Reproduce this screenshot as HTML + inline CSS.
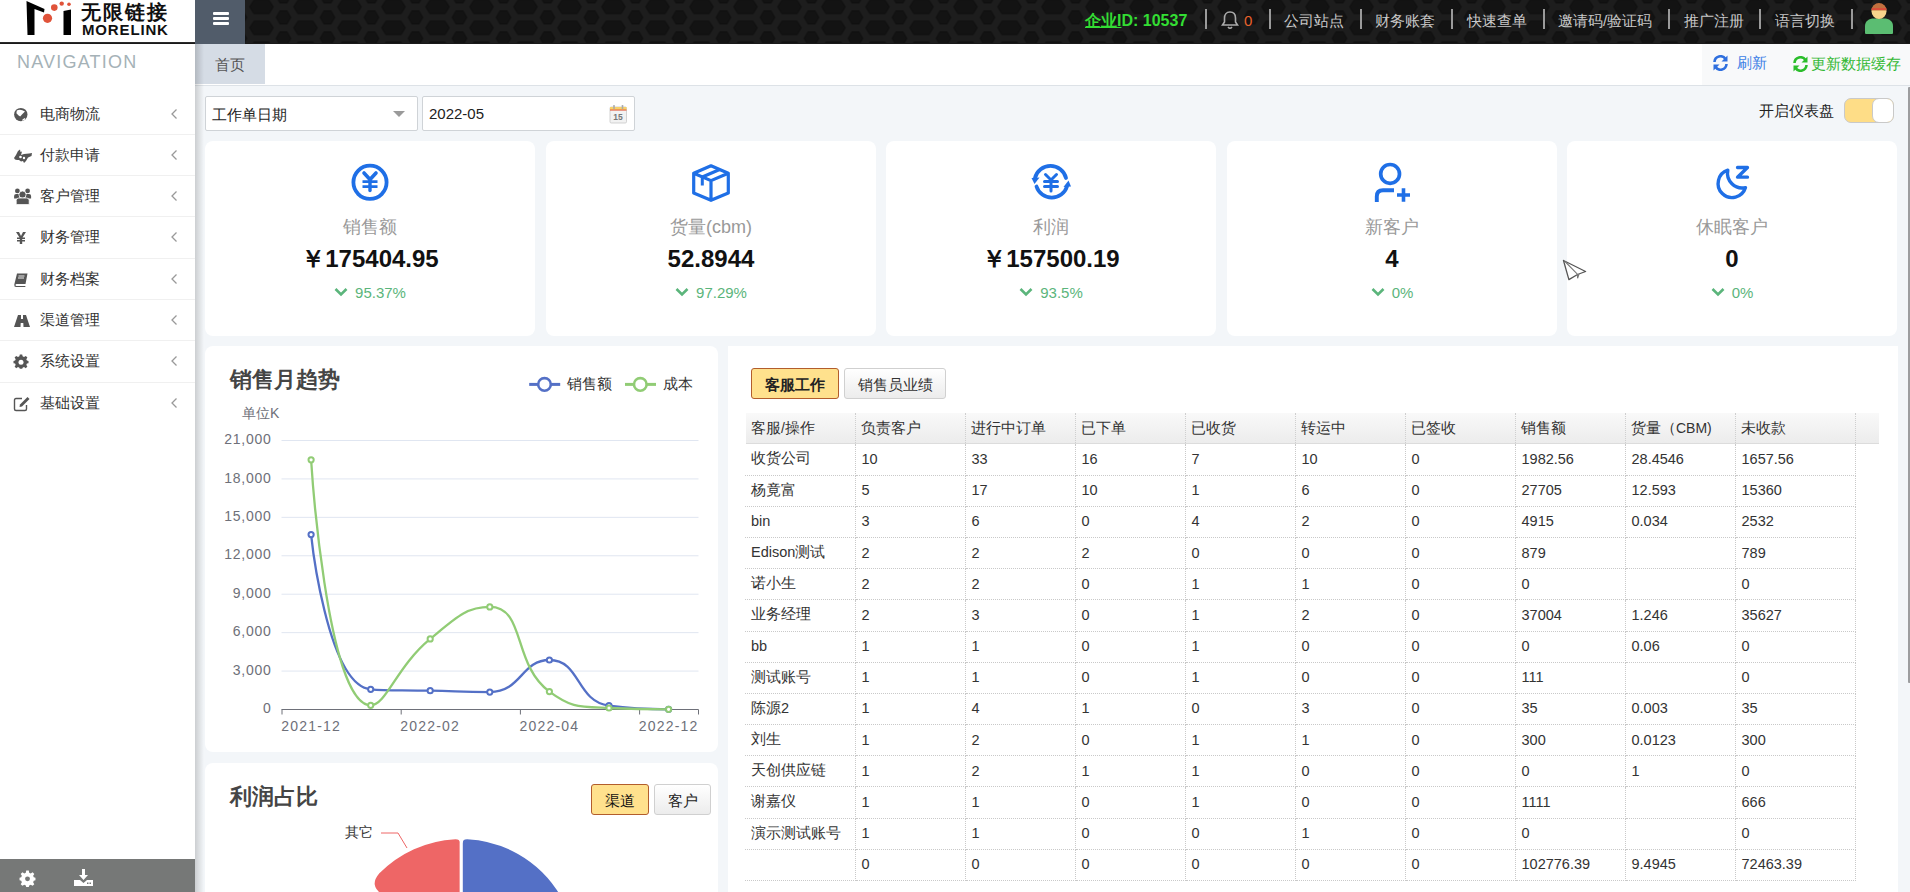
<!DOCTYPE html>
<html><head><meta charset="utf-8">
<style>
*{box-sizing:border-box;margin:0;padding:0}
html,body{width:1910px;height:892px;overflow:hidden;background:#f3f6f9;font-family:"Liberation Sans",sans-serif;color:#333}
.abs{position:absolute}
#hdr{position:absolute;left:0;top:0;width:1910px;height:44px;background:#161616}
#logo{position:absolute;left:0;top:0;width:195px;height:43px;background:#fff;border-bottom:1px solid #2a2a2a}
#ham{position:absolute;left:195px;top:0;width:50px;height:44px;background:#515c6a}
.topnav{position:absolute;top:0;height:44px;line-height:42px;font-size:15px;color:#c8c8c8;white-space:nowrap}
.tsep{position:absolute;top:9px;width:2px;height:20px;background:#9a9a9a}
#side{position:absolute;left:0;top:44px;width:195px;height:848px;background:#fff}
.nav-t{position:absolute;left:17px;top:8px;font-size:18px;color:#a5b2b7;letter-spacing:1.2px}
.mi{position:absolute;left:0;width:195px;height:41.3px;border-bottom:1px solid #f0f0f0}
.mi .tx{position:absolute;left:40px;top:0;line-height:40px;font-size:15px;color:#333}
.mi .ch{position:absolute;left:170px;top:14px}
.mi .ic{position:absolute;left:13px;top:13px}
#sfoot{position:absolute;left:0;top:859px;width:195px;height:33px;background:#767877}
#shadow{position:absolute;left:195px;top:44px;width:9px;height:848px;background:linear-gradient(to right,rgba(0,0,0,0.16),rgba(0,0,0,0))}
#tabbar{position:absolute;left:195px;top:44px;width:1715px;height:42px;background:#fff;border-bottom:1px solid #dde2e7}
#tab1{position:absolute;left:0;top:0;width:70px;height:40px;background:#d5dce5;font-size:15px;color:#555;line-height:42px;padding-left:20px}
#tbright{position:absolute;left:1507px;top:0;width:208px;height:41px;background:#f8f9fa}
.card{position:absolute;background:#fff;border-radius:8px}
.kpi .lbl{position:absolute;left:0;width:100%;text-align:center;top:76px;font-size:18px;color:#999;line-height:20px}
.kpi .val{position:absolute;left:0;width:100%;text-align:center;top:104px;font-size:24px;font-weight:bold;color:#111;line-height:28px}
.kpi .pct{position:absolute;left:0;width:100%;text-align:center;top:143px;font-size:15px;color:#5bb57b;line-height:18px}
.kpi svg.ico{position:absolute;top:21px}
table.t{position:absolute;border-collapse:collapse;table-layout:fixed;font-size:14.5px;color:#333}
.cj{font-size:15px}
table.t td{height:31.18px;padding:0 0 1px 6px;border-right:1px dotted #c9c9c9;border-bottom:1px dotted #c9c9c9;white-space:nowrap;overflow:hidden;vertical-align:middle}
.btn{position:absolute;font-size:14px;text-align:center;border-radius:3px}
.btn.on{background:#ffe18d;border:1px solid #b25d2c;font-weight:bold;color:#222}
.btn.off{background:linear-gradient(#fff,#ececec);border:1px solid #d0d0d0;color:#333}
</style></head><body>
<div id="hdr">
<svg width="1910" height="44" style="position:absolute;left:0;top:0">
<defs><pattern id="hex" patternUnits="userSpaceOnUse" x="239.5" y="-3.6" width="44" height="21">
<rect width="44" height="21" fill="#1d1d1d"/>
<polygon points="9.7,10.5 14.2,3.3 29.8,3.3 34.3,10.5 29.8,17.7 14.2,17.7" fill="#0e0e0e"/>
<polygon points="10.9,10.5 14.9,4.3 29.1,4.3 33.1,10.5 29.1,16.7 14.9,16.7" fill="#131313"/>
<polygon points="-7.8,0 -3.8,-7 3.8,-7 7.8,0 3.8,7 -3.8,7" fill="#0e0e0e"/>
<polygon points="36.2,0 40.2,-7 47.8,-7 51.8,0 47.8,7 40.2,7" fill="#0e0e0e"/>
<polygon points="-7.8,21 -3.8,14 3.8,14 7.8,21 3.8,28 -3.8,28" fill="#0e0e0e"/>
<polygon points="36.2,21 40.2,14 47.8,14 51.8,21 47.8,28 40.2,28" fill="#0e0e0e"/>
<polygon points="-6.6,0 -3.2,-6 3.2,-6 6.6,0 3.2,6 -3.2,6" fill="#131313"/>
<polygon points="37.4,0 40.8,-6 47.2,-6 50.6,0 47.2,6 40.8,6" fill="#131313"/>
<polygon points="-6.6,21 -3.2,15 3.2,15 6.6,21 3.2,27 -3.2,27" fill="#131313"/>
<polygon points="37.4,21 40.8,15 47.2,15 50.6,21 47.2,27 40.8,27" fill="#131313"/>
</pattern></defs>
<rect x="245" y="0" width="1665" height="44" fill="url(#hex)"/>
<rect x="0" y="43" width="1910" height="1" fill="#1a1a1a"/>
</svg>
</div>
<div id="logo">
<svg width="195" height="43" style="position:absolute;left:0;top:0">
<path d="M26.5,1 L27.5,35 L34.5,35 L34.5,9 L44,12.5 L44.5,9 Z" fill="#000"/>
<path d="M63.5,11 L71,9.5 L71,35 L63.5,35 Z" fill="#000"/>
<circle cx="47.5" cy="18.3" r="4.6" fill="#e0533a"/>
<circle cx="54.3" cy="7.6" r="3.3" fill="#e0533a"/>
<circle cx="61.7" cy="3.6" r="2.2" fill="#e0533a"/>
<circle cx="69" cy="4.3" r="1.8" fill="#e0533a"/>
</svg>
<div class="abs" style="left:81px;top:-1px;font-size:20px;line-height:26px;color:#111;letter-spacing:2px;font-weight:bold">无限链接</div>
<div class="abs" style="left:82px;top:21px;font-size:15px;line-height:17px;color:#111;font-weight:bold;letter-spacing:0.85px">MORELINK</div>
</div>
<div id="ham">
<div class="abs" style="left:18px;top:12px;width:16px;height:3px;background:#fff;border-radius:1px"></div>
<div class="abs" style="left:18px;top:17px;width:16px;height:3px;background:#fff;border-radius:1px"></div>
<div class="abs" style="left:18px;top:22px;width:16px;height:3px;background:#fff;border-radius:1px"></div>
</div>
<div class="topnav" style="left:1085px;color:#33dd33;font-weight:bold;font-size:16px"><span style="text-decoration:underline">企业I</span>D:&nbsp;10537</div>
<div class="tsep" style="left:1205px"></div>
<svg class="abs" style="left:1221px;top:10px" width="18" height="20" viewBox="0 0 18 20"><path d="M9,2 C5,2 3.5,5 3.5,8 L3.5,12 L1.5,15 L16.5,15 L14.5,12 L14.5,8 C14.5,5 13,2 9,2 Z" fill="none" stroke="#aaa" stroke-width="1.6"/><path d="M7,17 Q9,19.5 11,17" fill="none" stroke="#aaa" stroke-width="1.6"/></svg>
<div class="topnav" style="left:1244px;color:#e8622c">0</div>
<div class="tsep" style="left:1269px"></div>
<div class="topnav" style="left:1284px">公司站点</div>
<div class="tsep" style="left:1360px"></div>
<div class="topnav" style="left:1375px">财务账套</div>
<div class="tsep" style="left:1451px"></div>
<div class="topnav" style="left:1467px">快速查单</div>
<div class="tsep" style="left:1543px"></div>
<div class="topnav" style="left:1558px">邀请码/验证码</div>
<div class="tsep" style="left:1668px"></div>
<div class="topnav" style="left:1684px">推广注册</div>
<div class="tsep" style="left:1759px"></div>
<div class="topnav" style="left:1775px">语言切换</div>
<div class="tsep" style="left:1851px"></div>
<svg class="abs" style="left:1864px;top:2px" width="30" height="32" viewBox="0 0 30 32">
<path d="M1,31 L1,24 C1,19 5,16.5 10,16.5 L20,16.5 C25,16.5 29,19 29,24 L29,31 Q29,32 28,32 L2,32 Q1,32 1,31Z" fill="#5bbd72"/>
<circle cx="15" cy="9.5" r="7.5" fill="#f8d48c"/>
<path d="M7.5,8.5 A7.5,7.5 0 0 1 22.5,8.5 Z" fill="#c2703e"/>
<rect x="7.6" y="6.2" width="14.8" height="1.6" fill="#e0483a"/>
</svg>
<div id="side">
<div class="nav-t">NAVIGATION</div>
<div class="mi" style="top:49.5px"><div class="ic"><svg width="16" height="16" viewBox="0 0 16 16"><circle cx="7.8" cy="7.6" r="6.7" fill="#555"/><path d="M3.8,3.4 Q7.5,1.6 12,4.4 L9.2,7.2 L7.2,9.4 L5.6,8.6 L3.4,6.2 Z" fill="#fff"/><path d="M9,12.9 L11.5,11.1 L12.5,11.9 Q11.2,13.4 9.5,13.8 Z" fill="#fff"/></svg></div><div class="tx">电商物流</div><svg class="ch" width="8" height="12" viewBox="0 0 8 12"><path d="M6.5,1.5 L2,6 L6.5,10.5" fill="none" stroke="#999" stroke-width="1.3"/></svg></div>
<div class="mi" style="top:90.8px"><div class="ic"><svg width="20" height="16" viewBox="0 0 20 16"><path d="M1,10 L3,7 L5,3 L7,1.5 L7.5,4 L9,3.5 L8,7 L11,6 L16,5.5 L19,5 L18.5,8 L15,9.5 L13,13 L11,15 L10,13 L8,13.5 L6,12 L4,12 L2,11.5Z" fill="#555"/><circle cx="7.5" cy="9" r="1.3" fill="#fff"/><circle cx="11" cy="10" r="1.2" fill="#fff"/></svg></div><div class="tx">付款申请</div><svg class="ch" width="8" height="12" viewBox="0 0 8 12"><path d="M6.5,1.5 L2,6 L6.5,10.5" fill="none" stroke="#999" stroke-width="1.3"/></svg></div>
<div class="mi" style="top:132.1px"><div class="ic"><svg width="20" height="18" viewBox="0 0 20 18" style="margin:-2px 0 0 -1px"><circle cx="5.4" cy="3.9" r="2.4" fill="#555"/><circle cx="15.6" cy="3.9" r="2.4" fill="#555"/><path d="M2.1,11.4 L2.1,9 Q2.1,6.9 4.2,6.9 L7.5,6.9 L7.5,11.4Z M19.1,11.4 L19.1,9 Q19.1,6.9 17,6.9 L13.5,6.9 L13.5,11.4Z" fill="#555"/><circle cx="10.5" cy="7.6" r="3.6" fill="#555" stroke="#fff" stroke-width="0.8"/><path d="M4.2,17.6 L4.2,13.5 Q4.2,11 6.7,11 L14.7,11 Q17.2,11 17.2,13.5 L17.2,17.6Z" fill="#555" stroke="#fff" stroke-width="0.8"/></svg></div><div class="tx">客户管理</div><svg class="ch" width="8" height="12" viewBox="0 0 8 12"><path d="M6.5,1.5 L2,6 L6.5,10.5" fill="none" stroke="#999" stroke-width="1.3"/></svg></div>
<div class="mi" style="top:173.4px"><div class="ic"><svg width="16" height="16" viewBox="0 0 16 16"><path d="M3,2 L6,2 L8,6 L10,2 L13,2 L9.5,7.5 L12,7.5 L12,9 L9.2,9 L9.2,10 L12,10 L12,11.5 L9.2,11.5 L9.2,14 L6.8,14 L6.8,11.5 L4,11.5 L4,10 L6.8,10 L6.8,9 L4,9 L4,7.5 L6.5,7.5Z" fill="#555"/></svg></div><div class="tx">财务管理</div><svg class="ch" width="8" height="12" viewBox="0 0 8 12"><path d="M6.5,1.5 L2,6 L6.5,10.5" fill="none" stroke="#999" stroke-width="1.3"/></svg></div>
<div class="mi" style="top:214.7px"><div class="ic"><svg width="16" height="16" viewBox="0 0 16 16"><path d="M4,1.5 L14.5,1.5 L12.5,12 L3.5,12 Q2.5,12 2.5,13 Q2.5,14 3.5,14 L12.5,14 L12.2,15 L3,15 Q1,15 1.3,12.5 Z" fill="#555"/><path d="M5.5,4 L11.5,4 M5,6 L11,6" stroke="#fff" stroke-width="0.9"/></svg></div><div class="tx">财务档案</div><svg class="ch" width="8" height="12" viewBox="0 0 8 12"><path d="M6.5,1.5 L2,6 L6.5,10.5" fill="none" stroke="#999" stroke-width="1.3"/></svg></div>
<div class="mi" style="top:256.0px"><div class="ic"><svg width="18" height="16" viewBox="0 0 18 16"><path d="M5,2 L8,2 L8,6 L10,6 L10,2 L13,2 L17,14 L10.5,14 L10.3,10 L7.7,10 L7.5,14 L1,14Z" fill="#555"/></svg></div><div class="tx">渠道管理</div><svg class="ch" width="8" height="12" viewBox="0 0 8 12"><path d="M6.5,1.5 L2,6 L6.5,10.5" fill="none" stroke="#999" stroke-width="1.3"/></svg></div>
<div class="mi" style="top:297.3px"><div class="ic"><svg width="16" height="16" viewBox="0 0 16 16"><path d="M6.8,1 L9.2,1 L9.6,3 L11,3.7 L12.8,2.6 L14.4,4.2 L13.3,6 L13.9,7.4 L15.5,7.8 L15.5,10.2 L13.9,10.6 L13.3,12 L14.4,13.8 L12.8,15.4 L11,14.3 L9.6,14.9 L9.2,16 L6.8,16 L6.4,14.9 L5,14.3 L3.2,15.4 L1.6,13.8 L2.7,12 L2.1,10.6 L0.5,10.2 L0.5,7.8 L2.1,7.4 L2.7,6 L1.6,4.2 L3.2,2.6 L5,3.7 L6.4,3Z" fill="#555" transform="translate(0,-0.5) scale(1,0.95)"/><circle cx="8" cy="8.3" r="2.5" fill="#fff"/></svg></div><div class="tx">系统设置</div><svg class="ch" width="8" height="12" viewBox="0 0 8 12"><path d="M6.5,1.5 L2,6 L6.5,10.5" fill="none" stroke="#999" stroke-width="1.3"/></svg></div>
<div class="mi" style="top:338.6px;border-bottom:none"><div class="ic"><svg width="18" height="16" viewBox="0 0 18 16"><path d="M9,2.5 L3,2.5 Q1.5,2.5 1.5,4 L1.5,13 Q1.5,14.5 3,14.5 L12,14.5 Q13.5,14.5 13.5,13 L13.5,9" fill="none" stroke="#555" stroke-width="1.4"/><path d="M14.5,1 L16.5,3 L9,10.5 L6.5,11 L7,8.5Z" fill="#555"/></svg></div><div class="tx">基础设置</div><svg class="ch" width="8" height="12" viewBox="0 0 8 12"><path d="M6.5,1.5 L2,6 L6.5,10.5" fill="none" stroke="#999" stroke-width="1.3"/></svg></div>
</div>
<div id="sfoot">
<svg class="abs" style="left:19px;top:11px" width="17" height="17" viewBox="0 0 16 16"><path d="M6.8,0.5 L9.2,0.5 L9.6,2.5 L11,3.2 L12.8,2.1 L14.4,3.7 L13.3,5.5 L13.9,6.9 L15.5,7.3 L15.5,9.7 L13.9,10.1 L13.3,11.5 L14.4,13.3 L12.8,14.9 L11,13.8 L9.6,14.5 L9.2,16 L6.8,16 L6.4,14.5 L5,13.8 L3.2,14.9 L1.6,13.3 L2.7,11.5 L2.1,10.1 L0.5,9.7 L0.5,7.3 L2.1,6.9 L2.7,5.5 L1.6,3.7 L3.2,2.1 L5,3.2 L6.4,2.5Z" fill="#fff"/><circle cx="8" cy="8.3" r="2.3" fill="#767877"/></svg>
<svg class="abs" style="left:74px;top:10px" width="19" height="18" viewBox="0 0 19 18"><path d="M8,0 L11,0 L11,6 L14,6 L9.5,11 L5,6 L8,6Z" fill="#fff"/><path d="M0,11 L6,11 L9.5,14 L13,11 L19,11 L19,17 L0,17Z" fill="#fff"/><rect x="13" y="13.5" width="1.5" height="1.5" fill="#767877"/><rect x="15.5" y="13.5" width="1.5" height="1.5" fill="#767877"/></svg>
</div><div id="tabbar">
<div id="tab1">首页</div>
<div id="tbright">
<svg class="abs" style="left:10px;top:11px" width="17" height="16" viewBox="0 0 17 16"><path d="M2.5,7 A6,6 0 0 1 13.5,4" fill="none" stroke="#2f6fde" stroke-width="2.6"/><path d="M15.5,0.5 L15.5,6.5 L9.5,6.5Z" fill="#2f6fde"/><path d="M14.5,9 A6,6 0 0 1 3.5,12" fill="none" stroke="#2f6fde" stroke-width="2.6"/><path d="M1.5,15.5 L1.5,9.5 L7.5,9.5Z" fill="#2f6fde"/></svg>
<div class="abs" style="left:35px;top:0;line-height:38px;font-size:15px;color:#3d7fe6">刷新</div>
<svg class="abs" style="left:90px;top:12px" width="17" height="16" viewBox="0 0 17 16"><path d="M2.5,7 A6,6 0 0 1 13.5,4" fill="none" stroke="#2bbd2b" stroke-width="2.6"/><path d="M15.5,0.5 L15.5,6.5 L9.5,6.5Z" fill="#2bbd2b"/><path d="M14.5,9 A6,6 0 0 1 3.5,12" fill="none" stroke="#2bbd2b" stroke-width="2.6"/><path d="M1.5,15.5 L1.5,9.5 L7.5,9.5Z" fill="#2bbd2b"/></svg>
<div class="abs" style="left:109px;top:1px;line-height:38px;font-size:15px;color:#33b833">更新数据缓存</div>
</div>
</div>
<div id="shadow"></div>
<div class="abs" style="left:205px;top:96px;width:213px;height:35px;background:#fff;border:1px solid #cfd3d7;border-radius:2px">
<div class="abs" style="left:6px;top:1px;line-height:33px;font-size:15px;color:#222">工作单日期</div>
<svg class="abs" style="left:187px;top:14px" width="12" height="7"><path d="M0,0 L12,0 L6,6Z" fill="#9a9a9a"/></svg>
</div>
<div class="abs" style="left:422px;top:96px;width:213px;height:35px;background:#fff;border:1px solid #cfd3d7;border-radius:2px">
<div class="abs" style="left:6px;top:0;line-height:33px;font-size:15px;color:#222">2022-05</div>
<svg class="abs" style="left:186px;top:7px" width="19" height="20" viewBox="0 0 19 20"><rect x="1" y="3" width="16.5" height="16" rx="1.2" fill="#f2f2f2" stroke="#c8c8c8" stroke-width="0.8"/><rect x="1" y="3" width="16.5" height="3.2" fill="#f7d26a"/><rect x="1" y="5.6" width="16.5" height="0.9" fill="#e0483a"/><rect x="4.2" y="1" width="1.6" height="4" rx="0.6" fill="#aaa"/><rect x="12.7" y="1" width="1.6" height="4" rx="0.6" fill="#aaa"/><text x="9" y="15.5" font-size="8.5" font-weight="bold" text-anchor="middle" fill="#777" font-family="Liberation Sans">15</text></svg>
</div>
<div class="abs" style="left:1759px;top:101px;line-height:20px;font-size:15px;color:#222">开启仪表盘</div>
<div class="abs" style="left:1844px;top:98px;width:50px;height:25px;border-radius:7px;background:#fedd87;border:1px solid #c9c9c9;overflow:hidden">
<div class="abs" style="left:27px;top:-1px;width:22px;height:25px;border-radius:7px;background:#fff;border:1px solid #c9c9c9"></div>
</div>
<div class="abs" style="left:1908px;top:87px;width:2px;height:596px;background:#9c9d9f;border-radius:1px 0 0 1px"></div>
<div class="card kpi" style="left:205px;top:141px;width:330px;height:195px"><svg class="ico" style="left:145px" width="40" height="40" viewBox="0 0 40 40"><circle cx="20" cy="20.3" r="16.6" fill="none" stroke="#1f6fe6" stroke-width="3.8"/><path d="M14,11 L20,17.5 L26,11" fill="none" stroke="#1f6fe6" stroke-width="3.6" stroke-linecap="round"/><path d="M12.5,19.7 L27.5,19.7 M12.5,24.6 L27.5,24.6" fill="none" stroke="#1f6fe6" stroke-width="2.8"/><path d="M20,17 L20,28.5" fill="none" stroke="#1f6fe6" stroke-width="3.4" stroke-linecap="round"/></svg><div class="lbl">销售额</div><div class="val">￥175404.95</div><div class="pct"><svg width="14" height="10" viewBox="0 0 14 10" style="vertical-align:1px;margin-right:7px"><path d="M1.5,2 L7,7.5 L12.5,2" fill="none" stroke="#5bb57b" stroke-width="2.6"/></svg>95.37%</div></div>
<div class="card kpi" style="left:546px;top:141px;width:330px;height:195px"><svg class="ico" style="left:145px" width="40" height="40" viewBox="0 0 40 40"><path d="M20,3.8 L37.3,11.2 L37.3,31 L20,38.3 L2.7,31 L2.7,11.2 Z M2.7,11.2 L20,18.6 L37.3,11.2 M20,18.6 L20,38.3" fill="none" stroke="#1f6fe6" stroke-width="3.2" stroke-linejoin="round"/><path d="M11.3,15 L28.7,7.5 M11.3,15 L11.3,23.5" fill="none" stroke="#1f6fe6" stroke-width="3"/></svg><div class="lbl">货量(cbm)</div><div class="val">52.8944</div><div class="pct"><svg width="14" height="10" viewBox="0 0 14 10" style="vertical-align:1px;margin-right:7px"><path d="M1.5,2 L7,7.5 L12.5,2" fill="none" stroke="#5bb57b" stroke-width="2.6"/></svg>97.29%</div></div>
<div class="card kpi" style="left:886px;top:141px;width:330px;height:195px"><svg class="ico" style="left:145px" width="40" height="40" viewBox="0 0 40 40"><path d="M4,16 A16,16 0 0 1 35,16" fill="none" stroke="#1f6fe6" stroke-width="3.8" stroke-linecap="round"/><path d="M5.5,24.5 A16,16 0 0 0 36,24.5" fill="none" stroke="#1f6fe6" stroke-width="3.8" stroke-linecap="round"/><path d="M0.5,16 L8.5,15.5 L3.5,22Z" fill="#1f6fe6"/><path d="M40,24.5 L32.5,25 L37.5,18.5Z" fill="#1f6fe6"/><path d="M14.5,12.5 L20,18 L25.5,12.5" fill="none" stroke="#1f6fe6" stroke-width="3" stroke-linecap="round"/><path d="M13.5,19.5 L26.5,19.5 M13.5,24.5 L26.5,24.5 M20,18 L20,29" fill="none" stroke="#1f6fe6" stroke-width="3" stroke-linecap="round"/></svg><div class="lbl">利润</div><div class="val">￥157500.19</div><div class="pct"><svg width="14" height="10" viewBox="0 0 14 10" style="vertical-align:1px;margin-right:7px"><path d="M1.5,2 L7,7.5 L12.5,2" fill="none" stroke="#5bb57b" stroke-width="2.6"/></svg>93.5%</div></div>
<div class="card kpi" style="left:1227px;top:141px;width:330px;height:195px"><svg class="ico" style="left:145px" width="40" height="40" viewBox="0 0 40 40"><circle cx="18.1" cy="11.9" r="9.4" fill="none" stroke="#1f6fe6" stroke-width="3.7"/><path d="M4.8,40 L4.8,34.5 Q4.8,28.3 11,28.3 L22,28.3" fill="none" stroke="#1f6fe6" stroke-width="3.9"/><path d="M25,33 L38,33 M31.5,26.3 L31.5,39.8" fill="none" stroke="#1f6fe6" stroke-width="3.6"/></svg><div class="lbl">新客户</div><div class="val">4</div><div class="pct"><svg width="14" height="10" viewBox="0 0 14 10" style="vertical-align:1px;margin-right:7px"><path d="M1.5,2 L7,7.5 L12.5,2" fill="none" stroke="#5bb57b" stroke-width="2.6"/></svg>0%</div></div>
<div class="card kpi" style="left:1567px;top:141px;width:330px;height:195px"><svg class="ico" style="left:145px" width="40" height="40" viewBox="0 0 40 40"><path d="M15.8,8.2 A14,14 0 1 0 33.5,25.6 A14.8,14.8 0 0 1 15.8,8.2 Z" fill="none" stroke="#1f6fe6" stroke-width="3.4" stroke-linejoin="round"/><path d="M25.5,5.5 L35.5,5.5 L25.5,15.2 L35.5,15.2" fill="none" stroke="#1f6fe6" stroke-width="3.3" stroke-linejoin="round" stroke-linecap="round"/></svg><div class="lbl">休眠客户</div><div class="val">0</div><div class="pct"><svg width="14" height="10" viewBox="0 0 14 10" style="vertical-align:1px;margin-right:7px"><path d="M1.5,2 L7,7.5 L12.5,2" fill="none" stroke="#5bb57b" stroke-width="2.6"/></svg>0%</div></div><div class="card" style="left:205px;top:346px;width:513px;height:406px">
<div class="abs" style="left:25px;top:18px;font-size:22px;font-weight:bold;color:#454545;line-height:32px">销售月趋势</div>
<svg class="abs" style="left:0;top:0" width="513" height="406">
<text x="66.5" y="367.10" text-anchor="end" font-size="14" letter-spacing="0.75" fill="#6e7079" font-family="Liberation Sans">0</text>
<line x1="76.5" y1="325.07" x2="493.5" y2="325.07" stroke="#e0e6f1" stroke-width="1"/>
<text x="66.5" y="328.67" text-anchor="end" font-size="14" letter-spacing="0.75" fill="#6e7079" font-family="Liberation Sans">3,000</text>
<line x1="76.5" y1="286.64" x2="493.5" y2="286.64" stroke="#e0e6f1" stroke-width="1"/>
<text x="66.5" y="290.24" text-anchor="end" font-size="14" letter-spacing="0.75" fill="#6e7079" font-family="Liberation Sans">6,000</text>
<line x1="76.5" y1="248.21" x2="493.5" y2="248.21" stroke="#e0e6f1" stroke-width="1"/>
<text x="66.5" y="251.81" text-anchor="end" font-size="14" letter-spacing="0.75" fill="#6e7079" font-family="Liberation Sans">9,000</text>
<line x1="76.5" y1="209.78" x2="493.5" y2="209.78" stroke="#e0e6f1" stroke-width="1"/>
<text x="66.5" y="213.38" text-anchor="end" font-size="14" letter-spacing="0.75" fill="#6e7079" font-family="Liberation Sans">12,000</text>
<line x1="76.5" y1="171.35" x2="493.5" y2="171.35" stroke="#e0e6f1" stroke-width="1"/>
<text x="66.5" y="174.95" text-anchor="end" font-size="14" letter-spacing="0.75" fill="#6e7079" font-family="Liberation Sans">15,000</text>
<line x1="76.5" y1="132.92" x2="493.5" y2="132.92" stroke="#e0e6f1" stroke-width="1"/>
<text x="66.5" y="136.52" text-anchor="end" font-size="14" letter-spacing="0.75" fill="#6e7079" font-family="Liberation Sans">18,000</text>
<line x1="76.5" y1="94.49" x2="493.5" y2="94.49" stroke="#e0e6f1" stroke-width="1"/>
<text x="66.5" y="98.09" text-anchor="end" font-size="14" letter-spacing="0.75" fill="#6e7079" font-family="Liberation Sans">21,000</text>
<line x1="76.5" y1="363.50" x2="493.5" y2="363.50" stroke="#6e7079" stroke-width="1"/>
<line x1="77.00" y1="363.50" x2="77.00" y2="368.50" stroke="#6e7079" stroke-width="1"/>
<line x1="196.20" y1="363.50" x2="196.20" y2="368.50" stroke="#6e7079" stroke-width="1"/>
<line x1="315.40" y1="363.50" x2="315.40" y2="368.50" stroke="#6e7079" stroke-width="1"/>
<line x1="434.60" y1="363.50" x2="434.60" y2="368.50" stroke="#6e7079" stroke-width="1"/>
<line x1="493.50" y1="363.50" x2="493.50" y2="368.50" stroke="#6e7079" stroke-width="1"/>
<text x="106.10" y="385" text-anchor="middle" font-size="14" letter-spacing="1.2" fill="#6e7079" font-family="Liberation Sans">2021-12</text>
<text x="225.20" y="385" text-anchor="middle" font-size="14" letter-spacing="1.2" fill="#6e7079" font-family="Liberation Sans">2022-02</text>
<text x="344.40" y="385" text-anchor="middle" font-size="14" letter-spacing="1.2" fill="#6e7079" font-family="Liberation Sans">2022-04</text>
<text x="463.60" y="385" text-anchor="middle" font-size="14" letter-spacing="1.2" fill="#6e7079" font-family="Liberation Sans">2022-12</text>
<text x="37" y="72" font-size="14" fill="#6e7079" font-family="Liberation Sans">单位K</text>
<path d="M106.10,188.60 C106.10,188.60 121.88,339.40 165.70,343.30 C181.43,344.70 195.45,344.00 225.20,344.70 C255.00,345.40 256.89,346.10 284.80,346.10 C316.49,346.10 316.15,314.00 344.40,314.00 C375.75,314.00 370.80,355.17 404.00,359.70 C430.40,363.30 463.60,363.30 463.60,363.30" fill="none" stroke="#5470c6" stroke-width="2.3"/>
<path d="M106.10,113.80 C106.10,113.80 121.68,359.30 165.70,359.30 C181.23,359.30 191.34,320.87 225.20,292.90 C250.89,271.67 261.25,260.90 284.80,260.90 C320.85,260.90 307.08,318.12 344.40,345.60 C366.68,362.00 373.66,360.65 404.00,362.00 C433.26,363.30 463.60,363.30 463.60,363.30" fill="none" stroke="#91cc75" stroke-width="2.3"/>
<circle cx="106.10" cy="188.60" r="2.6" fill="#fff" stroke="#5470c6" stroke-width="2"/>
<circle cx="165.70" cy="343.30" r="2.6" fill="#fff" stroke="#5470c6" stroke-width="2"/>
<circle cx="225.20" cy="344.70" r="2.6" fill="#fff" stroke="#5470c6" stroke-width="2"/>
<circle cx="284.80" cy="346.10" r="2.6" fill="#fff" stroke="#5470c6" stroke-width="2"/>
<circle cx="344.40" cy="314.00" r="2.6" fill="#fff" stroke="#5470c6" stroke-width="2"/>
<circle cx="404.00" cy="359.70" r="2.6" fill="#fff" stroke="#5470c6" stroke-width="2"/>
<circle cx="463.60" cy="363.30" r="2.6" fill="#fff" stroke="#5470c6" stroke-width="2"/>
<circle cx="106.10" cy="113.80" r="2.6" fill="#fff" stroke="#91cc75" stroke-width="2"/>
<circle cx="165.70" cy="359.30" r="2.6" fill="#fff" stroke="#91cc75" stroke-width="2"/>
<circle cx="225.20" cy="292.90" r="2.6" fill="#fff" stroke="#91cc75" stroke-width="2"/>
<circle cx="284.80" cy="260.90" r="2.6" fill="#fff" stroke="#91cc75" stroke-width="2"/>
<circle cx="344.40" cy="345.60" r="2.6" fill="#fff" stroke="#91cc75" stroke-width="2"/>
<circle cx="404.00" cy="362.00" r="2.6" fill="#fff" stroke="#91cc75" stroke-width="2"/>
<circle cx="463.60" cy="363.30" r="2.6" fill="#fff" stroke="#91cc75" stroke-width="2"/>
<line x1="324.2" y1="38.39999999999998" x2="355.2" y2="38.39999999999998" stroke="#5470c6" stroke-width="3"/>
<circle cx="339.5" cy="38.39999999999998" r="6.3" fill="#fff" stroke="#5470c6" stroke-width="2.6"/>
<text x="361.7" y="43.30000000000001" font-size="15" fill="#333" font-family="Liberation Sans">销售额</text>
<line x1="420.0" y1="38.39999999999998" x2="451.0" y2="38.39999999999998" stroke="#91cc75" stroke-width="3"/>
<circle cx="435.3" cy="38.39999999999998" r="6.3" fill="#fff" stroke="#91cc75" stroke-width="2.6"/>
<text x="457.5" y="43.30000000000001" font-size="15" fill="#333" font-family="Liberation Sans">成本</text>
</svg></div>
<div class="card" style="left:205px;top:763px;width:513px;height:160px">
<div class="abs" style="left:25px;top:18px;font-size:22px;font-weight:bold;color:#454545;line-height:32px">利润占比</div>
<div class="btn on" style="left:386px;top:21px;width:58px;height:31px;line-height:32px;font-size:15px;font-weight:normal;color:#111">渠道</div>
<div class="btn off" style="left:449px;top:21px;width:57px;height:31px;line-height:32px;font-size:15px;color:#222">客户</div>
<svg class="abs" style="left:0;top:0" width="513" height="160">
<path d="M256.30,191.00 L175.80,132.52 Q162.05,122.52 173.01,109.55 A116.5,116.5 0 0 1 250.30,74.65 Q256.30,74.50 256.30,80.50 Z" fill="#ee6666" stroke="#fff" stroke-width="3" stroke-linejoin="round"/>
<path d="M256.30,191.00 L256.30,80.50 Q256.30,74.50 262.30,74.65 A116.5,116.5 0 0 1 360.51,243.09 Q357.19,249.25 351.13,245.75 Z" fill="#5470c6" stroke="#fff" stroke-width="3" stroke-linejoin="round"/>
<polyline points="176,70 193,70 202,85" fill="none" stroke="#ee6666" stroke-width="1"/>
<text x="140" y="74" font-size="14" fill="#333" font-family="Liberation Sans">其它</text>
</svg></div><div class="abs" style="left:728px;top:346px;width:1170px;height:560px;background:#fff;border-radius:0"></div>
<div class="btn on" style="left:751px;top:368px;width:88px;height:31px;line-height:31px;font-size:15px">客服工作</div>
<div class="btn off" style="left:844px;top:368px;width:102px;height:31px;line-height:31px;font-size:15px">销售员业绩</div>
<div class="abs" style="left:746px;top:413px;width:1133px;height:31px;background:linear-gradient(#f9f9f9,#ececec);border-bottom:1px solid #dcdcdc"></div>
<div class="abs" style="left:751px;top:413px;line-height:30px;font-size:14px;color:#333;white-space:nowrap"><span class="cj">客服</span>/<span class="cj">操作</span></div>
<div class="abs" style="left:855px;top:413px;width:0;height:30px;border-left:1px dotted #cfcfcf"></div>
<div class="abs" style="left:861px;top:413px;line-height:30px;font-size:14px;color:#333;white-space:nowrap"><span class="cj">负责客户</span></div>
<div class="abs" style="left:965px;top:413px;width:0;height:30px;border-left:1px dotted #cfcfcf"></div>
<div class="abs" style="left:971px;top:413px;line-height:30px;font-size:14px;color:#333;white-space:nowrap"><span class="cj">进行中订单</span></div>
<div class="abs" style="left:1075px;top:413px;width:0;height:30px;border-left:1px dotted #cfcfcf"></div>
<div class="abs" style="left:1081px;top:413px;line-height:30px;font-size:14px;color:#333;white-space:nowrap"><span class="cj">已下单</span></div>
<div class="abs" style="left:1185px;top:413px;width:0;height:30px;border-left:1px dotted #cfcfcf"></div>
<div class="abs" style="left:1191px;top:413px;line-height:30px;font-size:14px;color:#333;white-space:nowrap"><span class="cj">已收货</span></div>
<div class="abs" style="left:1295px;top:413px;width:0;height:30px;border-left:1px dotted #cfcfcf"></div>
<div class="abs" style="left:1301px;top:413px;line-height:30px;font-size:14px;color:#333;white-space:nowrap"><span class="cj">转运中</span></div>
<div class="abs" style="left:1405px;top:413px;width:0;height:30px;border-left:1px dotted #cfcfcf"></div>
<div class="abs" style="left:1411px;top:413px;line-height:30px;font-size:14px;color:#333;white-space:nowrap"><span class="cj">已签收</span></div>
<div class="abs" style="left:1515px;top:413px;width:0;height:30px;border-left:1px dotted #cfcfcf"></div>
<div class="abs" style="left:1521px;top:413px;line-height:30px;font-size:14px;color:#333;white-space:nowrap"><span class="cj">销售额</span></div>
<div class="abs" style="left:1625px;top:413px;width:0;height:30px;border-left:1px dotted #cfcfcf"></div>
<div class="abs" style="left:1631px;top:413px;line-height:30px;font-size:14px;color:#333;white-space:nowrap"><span class="cj">货量（</span>CBM)</div>
<div class="abs" style="left:1735px;top:413px;width:0;height:30px;border-left:1px dotted #cfcfcf"></div>
<div class="abs" style="left:1741px;top:413px;line-height:30px;font-size:14px;color:#333;white-space:nowrap"><span class="cj">未收款</span></div>
<div class="abs" style="left:1855px;top:413px;width:0;height:30px;border-left:1px dotted #cfcfcf"></div>
<table class="t" style="left:745px;top:444px;width:1110px">
<colgroup><col style="width:110px"><col style="width:110px"><col style="width:110px"><col style="width:110px"><col style="width:110px"><col style="width:110px"><col style="width:110px"><col style="width:110px"><col style="width:110px"><col style="width:120px"></colgroup>
<tr><td><span class="cj">收货公司</span></td><td>10</td><td>33</td><td>16</td><td>7</td><td>10</td><td>0</td><td>1982.56</td><td>28.4546</td><td>1657.56</td></tr>
<tr><td><span class="cj">杨竟富</span></td><td>5</td><td>17</td><td>10</td><td>1</td><td>6</td><td>0</td><td>27705</td><td>12.593</td><td>15360</td></tr>
<tr><td>bin</td><td>3</td><td>6</td><td>0</td><td>4</td><td>2</td><td>0</td><td>4915</td><td>0.034</td><td>2532</td></tr>
<tr><td>Edison<span class="cj">测试</span></td><td>2</td><td>2</td><td>2</td><td>0</td><td>0</td><td>0</td><td>879</td><td></td><td>789</td></tr>
<tr><td><span class="cj">诺小生</span></td><td>2</td><td>2</td><td>0</td><td>1</td><td>1</td><td>0</td><td>0</td><td></td><td>0</td></tr>
<tr><td><span class="cj">业务经理</span></td><td>2</td><td>3</td><td>0</td><td>1</td><td>2</td><td>0</td><td>37004</td><td>1.246</td><td>35627</td></tr>
<tr><td>bb</td><td>1</td><td>1</td><td>0</td><td>1</td><td>0</td><td>0</td><td>0</td><td>0.06</td><td>0</td></tr>
<tr><td><span class="cj">测试账号</span></td><td>1</td><td>1</td><td>0</td><td>1</td><td>0</td><td>0</td><td>111</td><td></td><td>0</td></tr>
<tr><td><span class="cj">陈源</span>2</td><td>1</td><td>4</td><td>1</td><td>0</td><td>3</td><td>0</td><td>35</td><td>0.003</td><td>35</td></tr>
<tr><td><span class="cj">刘生</span></td><td>1</td><td>2</td><td>0</td><td>1</td><td>1</td><td>0</td><td>300</td><td>0.0123</td><td>300</td></tr>
<tr><td><span class="cj">天创供应链</span></td><td>1</td><td>2</td><td>1</td><td>1</td><td>0</td><td>0</td><td>0</td><td>1</td><td>0</td></tr>
<tr><td><span class="cj">谢嘉仪</span></td><td>1</td><td>1</td><td>0</td><td>1</td><td>0</td><td>0</td><td>1111</td><td></td><td>666</td></tr>
<tr><td><span class="cj">演示测试账号</span></td><td>1</td><td>1</td><td>0</td><td>0</td><td>1</td><td>0</td><td>0</td><td></td><td>0</td></tr>
<tr><td></td><td>0</td><td>0</td><td>0</td><td>0</td><td>0</td><td>0</td><td>102776.39</td><td>9.4945</td><td>72463.39</td></tr>
</table><svg class="abs" style="left:1555px;top:250px" width="40" height="40" viewBox="0 0 40 40">
<path d="M8.5,10.5 L30.6,21.5 L22.5,24.5 L13.9,29.6 Z" fill="#fff" stroke="#555" stroke-width="1.3" stroke-linejoin="round"/>
<path d="M10,11.5 L22.4,24.2 L22.6,28.3 L24,24" fill="none" stroke="#777" stroke-width="1.1"/>
</svg>
</body></html>
